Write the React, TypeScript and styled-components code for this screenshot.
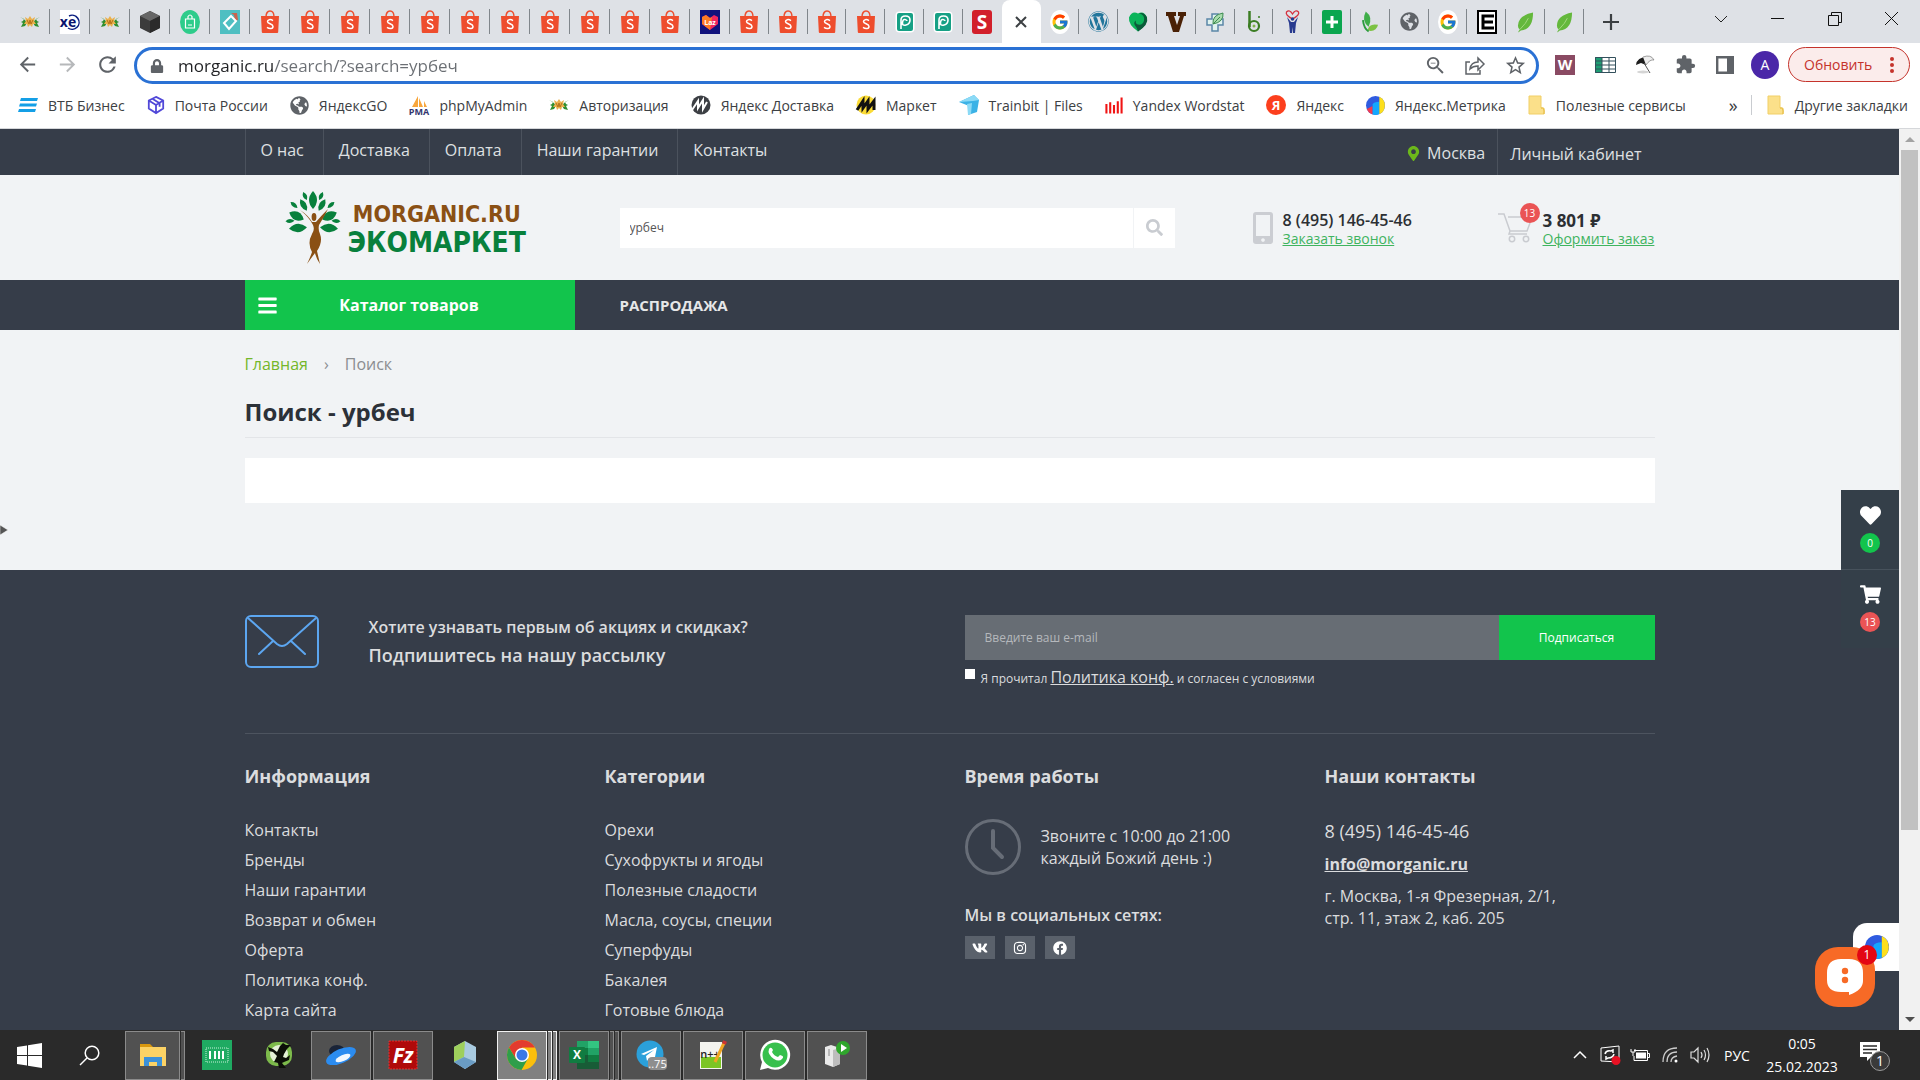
import React from "react";
import styled, { createGlobalStyle, css } from "styled-components";
import { FaHeart, FaShoppingCart, FaVk, FaInstagram, FaFacebook, FaSearch, FaMapMarkerAlt, FaWordpress, FaGlobeAmericas, FaLock, FaBars } from "react-icons/fa";
import { FcGoogle } from "react-icons/fc";
import { MdArrowBack, MdArrowForward, MdRefresh, MdStarBorder, MdZoomOut, MdExtension } from "react-icons/md";

const Global = createGlobalStyle`
  *, *::before, *::after { box-sizing: border-box; }
  body { margin: 0; background: #363d49; font-family: "Open Sans", "Noto Sans", sans-serif; font-size: 16px; }
  button, input { font-family: inherit; }
  button { border: 0; padding: 0; background: none; cursor: pointer; color: inherit; }
  a { color: inherit; text-decoration: none; }
  h1, h2, h3, p, ul { margin: 0; padding: 0; }
  ul { list-style: none; }
  svg { display: block; flex: none; overflow: visible; }
`;

const Screen = styled.div`
  height: 100vh;
  display: flex;
  flex-direction: column;
  overflow: hidden;
`;

/* ---------- browser chrome ---------- */
const TabStrip = styled.div`
  height: 43px;
  display: flex;
  background: #dee1e6;
  padding-left: 10px;
`;
const TabGroup = styled.div<{ $width: number }>`
  flex: 0 1 ${(p) => p.$width}px;
  display: flex;
`;
const Tab = styled.button<{ $active?: boolean; $line: boolean }>`
  flex: 1 1 0;
  display: flex;
  align-items: center;
  justify-content: center;
  background: linear-gradient(#80868b, #80868b) right center / ${(p) => (p.$line ? 1 : 0)}px 25px no-repeat;
  ${(p) => p.$active && css`
    background: #fff;
    border-radius: 8px 8px 0 0;
  `}
`;
const NewTab = styled.button`
  width: 54px;
  display: flex;
  align-items: center;
  justify-content: center;
`;
const WindowButtons = styled.div`
  margin-left: auto;
  display: flex;
`;
const WindowButton = styled.button`
  width: 57px;
  height: 37px;
  display: flex;
  align-items: center;
  justify-content: center;
`;
const Toolbar = styled.div`
  display: flex;
  align-items: center;
  height: 43px;
  padding: 0 10px 0 7px;
  background: #fff;
  color: #5f6368;
`;
const ToolButton = styled.button<{ $faded?: boolean }>`
  width: 40px;
  height: 36px;
  display: flex;
  align-items: center;
  justify-content: center;
  opacity: ${(p) => (p.$faded ? 0.45 : 1)};
`;
const AddressBar = styled.label`
  flex: 1;
  height: 37px;
  margin: 2px 6px 0 7px;
  padding: 0 1px 0 13px;
  display: flex;
  align-items: center;
  gap: 14px;
  border: 3px solid #2a71d4;
  border-radius: 20px;
`;
const AddressInput = styled.input`
  flex: 1;
  min-width: 0;
  border: 0;
  padding: 0;
  outline: 0;
  font-size: 17px;
  color: transparent;
  background: linear-gradient(90deg, #202124 96px, #6b6f74 96px);
  background-clip: text;
  -webkit-background-clip: text;
`;
const AddressActions = styled.span`
  display: flex;
`;
const Avatar = styled.span`
  width: 28px;
  height: 28px;
  border-radius: 50%;
  background: #4a27a8;
  color: #fff;
  font-size: 14px;
  line-height: 28px;
`;
const UpdateButton = styled.button`
  width: 122px;
  height: 35px;
  margin-left: 3px;
  padding: 0 15px;
  display: flex;
  align-items: center;
  justify-content: space-between;
  border: 1px solid #c5332b;
  border-radius: 18px;
  background: #fbeceb;
  color: #c5332b;
  font-size: 14px;
`;
const Bookmarks = styled.nav`
  height: 43px;
  padding: 0 12px 4px 18px;
  display: flex;
  align-items: center;
  background: #fff;
  border-bottom: 1px solid #d5d7da;
  color: #3c4043;
  font-size: 14px;
`;
const Bookmark = styled.a`
  display: flex;
  align-items: center;
  gap: 10px;
  margin-right: 22px;
  white-space: nowrap;
`;
const More = styled.button`
  margin-left: auto;
  font-size: 18px;
  line-height: 20px;
`;
const OtherBookmarks = styled(Bookmark)`
  margin: 0 0 0 13px;
  padding-left: 15px;
  border-left: 1px solid #c9ccd0;
`;

/* ---------- shop page ---------- */
const Viewport = styled.div`
  position: relative;
  flex: 1;
  min-height: 0;
  display: flex;
`;
const Page = styled.div`
  flex: 1;
  min-width: 0;
  overflow: hidden;
  background: #f1f3f5;
`;
const Container = styled.div`
  max-width: 1410px;
  margin: 0 auto;
`;
const TopBar = styled.div`
  background: #363d49;
  color: #dfe0e2;
`;
const TopRow = styled(Container)`
  height: 46px;
  display: flex;
  justify-content: space-between;
`;
const TopLinks = styled.nav`
  display: flex;
`;
const TopLink = styled.a`
  padding: 0 19px 0 15px;
  line-height: 42px;
  border-left: 1px solid #4b525d;
  &:last-child { padding-right: 0; }
`;
const TopSide = styled.div`
  display: flex;
  line-height: 48px;
`;
const City = styled.button`
  display: flex;
  align-items: center;
  gap: 6px;
  padding: 2px 12px 0 0;
  font-size: 16px;
`;
const Account = styled.a`
  padding: 1px 13px 0 12px;
  border-left: 1px solid #4b525d;
`;
const Header = styled(Container)`
  height: 105px;
  display: grid;
  grid-template-columns: 375px minmax(0, 1fr) 245px 157px;
  align-items: center;
`;
const Logo = styled.a`
  display: flex;
  align-items: center;
  gap: 6px;
  padding-left: 40px;
`;
const LogoWords = styled.span`
  display: flex;
  flex-direction: column;
  align-items: center;
  padding-top: 4px;
  font-family: "DejaVu Sans Condensed", "DejaVu Sans", sans-serif;
  font-weight: 700;
`;
const LogoName = styled.span`
  font-size: 23px;
  line-height: 26px;
  color: #8a5014;
`;
const LogoKind = styled.span`
  font-size: 28px;
  line-height: 32px;
  color: #08803c;
`;
const SearchForm = styled.form`
  display: flex;
  height: 40px;
  margin-right: 78px;
  background: #fff;
`;
const SearchInput = styled.input`
  flex: 1;
  min-width: 0;
  border: 0;
  padding: 0 10px;
  font-size: 12px;
  color: #555;
  background: none;
`;
const SearchButton = styled.button`
  width: 42px;
  display: flex;
  align-items: center;
  justify-content: center;
  border-left: 1px solid #f1f3f5;
  color: #c9ccd1;
`;
const Contact = styled.div`
  display: flex;
  align-items: center;
  gap: 10px;
  white-space: nowrap;
`;
const ContactText = styled.div`
  display: flex;
  flex-direction: column;
  line-height: 19px;
  padding-top: 3px;
`;
const Strong = styled.strong<{ $bold?: boolean }>`
  font-size: ${(p) => (p.$bold ? 17 : 16)}px;
  font-weight: ${(p) => (p.$bold ? 700 : 600)};
  color: #2c2f33;
`;
const GreenLink = styled.a`
  font-size: 14px;
  line-height: 18px;
  color: #3fb45f;
  text-decoration: underline;
`;
const CartMark = styled.span`
  position: relative;
  width: 35px;
`;
const Badge = styled.span<{ $color: string }>`
  width: 20px;
  height: 20px;
  border-radius: 50%;
  background: ${(p) => p.$color};
  color: #fff;
  font-size: 10px;
  line-height: 20px;
  text-align: center;
`;
const CartBadge = styled(Badge)`
  position: absolute;
  top: -10px;
  right: -7px;
`;
const MenuBar = styled.div`
  background: #363d49;
`;
const MenuRow = styled(Container)`
  display: flex;
  height: 50px;
  align-items: center;
`;
const CatalogButton = styled.button`
  width: 330px;
  height: 50px;
  padding: 0 34px 0 12px;
  display: flex;
  align-items: center;
  background: #12c44c;
  color: #fff;
  font-size: 16px;
  font-weight: 700;
`;
const CatalogLabel = styled.span`
  flex: 1;
  text-align: center;
`;
const MenuLink = styled.a`
  margin-left: 45px;
  color: #e6e7e8;
  font-size: 15px;
  font-weight: 700;
`;
const Main = styled(Container).attrs({ as: "main" })`
  padding: 22px 0 67px;
`;
const Crumbs = styled.nav`
  display: flex;
  gap: 16px;
  line-height: 24px;
  color: #8b8d90;
`;
const CrumbLink = styled.a`
  color: #74b72a;
`;
const Title = styled.h1`
  margin: 20px 0 20px;
  padding-bottom: 9px;
  border-bottom: 1px solid #e3e5e8;
  font-size: 24px;
  line-height: 32px;
  font-weight: 700;
  color: #2c3138;
`;
const Results = styled.section`
  height: 45px;
  background: #fff;
`;
const Footer = styled.footer`
  padding-top: 45px;
  background: #363d49;
  color: #dbdcde;
`;
const Subscribe = styled(Container)`
  display: grid;
  grid-template-columns: 720px minmax(0, 1fr);
  align-items: start;
  padding-bottom: 42px;
  border-bottom: 1px solid #4d545f;
`;
const Pitch = styled.div`
  display: flex;
  gap: 50px;
`;
const PitchText = styled.div`
  font-weight: 600;
`;
const PitchLine = styled.p<{ $large?: boolean }>`
  font-size: ${(p) => (p.$large ? 18 : 16)}px;
  line-height: ${(p) => (p.$large ? 32 : 24)}px;
`;
const MailForm = styled.form`
  display: grid;
  grid-template-columns: 1fr 156px;
`;
const MailInput = styled.input`
  height: 45px;
  min-width: 0;
  border: 0;
  padding: 0 20px;
  background: #676d74;
  color: #fff;
  font-size: 12px;
  &::placeholder { color: #b5b8bc; opacity: 1; }
`;
const MailButton = styled.button`
  background: #12c44c;
  color: #fff;
  font-size: 12px;
`;
const Agree = styled.div`
  grid-column: 1 / -1;
  display: flex;
  gap: 6px;
  padding-top: 5px;
  font-size: 12px;
  line-height: 24px;
`;
const Tick = styled.input`
  appearance: none;
  width: 10px;
  height: 10px;
  margin: 4px 0 0;
  background: #fff;
`;
const PolicyLink = styled.a`
  font-size: 16px;
  text-decoration: underline;
`;
const Columns = styled(Container)`
  display: grid;
  grid-template-columns: repeat(3, 360px) minmax(0, 1fr);
  padding: 30px 0 60px;
`;
const ColumnTitle = styled.h2`
  margin-bottom: 27px;
  font-size: 18px;
  line-height: 24px;
  font-weight: 700;
`;
const LinkList = styled.ul`
  line-height: 30px;
`;
const Hours = styled.div`
  display: flex;
  align-items: center;
  gap: 20px;
  padding-top: 4px;
  line-height: 22px;
`;
const SocialTitle = styled.h3`
  margin: 29px 0 10px;
  font-size: 16px;
  line-height: 22px;
  font-weight: 600;
`;
const Socials = styled.div`
  display: flex;
  gap: 10px;
`;
const Social = styled.a`
  width: 30px;
  height: 23px;
  display: flex;
  align-items: center;
  justify-content: center;
  background: #5a616b;
  color: #fff;
`;
const Address = styled.address`
  padding-top: 4px;
  display: flex;
  flex-direction: column;
  align-items: flex-start;
  gap: 10px;
  font-style: normal;
  line-height: 22px;
`;
const Phone = styled.a`
  font-size: 18px;
  line-height: 24px;
`;
const Mail = styled.a`
  font-weight: 700;
  text-decoration: underline;
`;

/* ---------- overlays ---------- */
const Scrollbar = styled.div`
  width: 21px;
  display: flex;
  flex-direction: column;
  align-items: center;
  justify-content: space-between;
  padding: 7px 0 7px;
  background: #f1f1f1;
`;
const Thumb = styled.div`
  width: 17px;
  flex: 0 1 680px;
  margin: 8px 0 auto;
  background: #c1c1c1;
`;
const SidePanel = styled.aside`
  position: absolute;
  right: 21px;
  top: 361px;
  width: 58px;
  background: #343f49;
  color: #fff;
`;
const SideItem = styled.a`
  height: 79px;
  padding-top: 15px;
  display: flex;
  flex-direction: column;
  align-items: center;
  gap: 7px;
  & + & { border-top: 1px solid #47525c; padding-top: 14px; }
`;
const Drawer = styled.button`
  position: absolute;
  left: 0;
  top: 395px;
`;
const MetrikaTab = styled.a`
  position: absolute;
  right: 21px;
  bottom: 59px;
  width: 46px;
  height: 48px;
  padding: 12px;
  border-radius: 14px 0 0 0;
  background: #fff;
`;
const Chat = styled.button`
  position: absolute;
  right: 45px;
  bottom: 23px;
  width: 60px;
  height: 60px;
  display: flex;
  align-items: center;
  justify-content: center;
  border-radius: 23px;
  background: #f76a26;
`;
const ChatBadge = styled(Badge)`
  position: absolute;
  right: -2px;
  top: -2px;
  font-size: 12px;
`;

/* ---------- taskbar ---------- */
const TaskBar = styled.footer`
  height: 50px;
  display: flex;
  align-items: center;
  background: #2a2a2a;
  color: #fff;
`;
const TaskButton = styled.button<{ $width: number }>`
  width: ${(p) => p.$width}px;
  height: 48px;
  display: flex;
  align-items: center;
  justify-content: center;
`;
const Apps = styled.div`
  display: flex;
  gap: 2px;
  margin-left: 5px;
`;
const AppButton = styled.button`
  width: 60px;
  height: 49px;
  display: flex;
  gap: 1px;
`;
const Face = styled.span<{ $mode: "idle" | "open" | "active" }>`
  flex: 1;
  display: flex;
  align-items: center;
  justify-content: center;
  border: 1px solid ${(p) => ({ idle: "transparent", open: "#8b8b8b", active: "#f2f2f2" })[p.$mode]};
  background: ${(p) => ({ idle: "transparent", open: "#515151", active: "#808080" })[p.$mode]};
`;
const Sliver = styled.span<{ $active: boolean }>`
  width: 4px;
  border: 1px solid ${(p) => (p.$active ? "#f2f2f2" : "#8b8b8b")};
  border-left: 0;
  background: ${(p) => (p.$active ? "#808080" : "#515151")};
`;
const Tray = styled.div`
  margin-left: auto;
  padding-right: 15px;
  display: flex;
  align-items: center;
`;
const Language = styled.button`
  width: 44px;
  font-size: 14px;
`;
const Clock = styled.time`
  width: 86px;
  font-size: 14px;
  line-height: 23px;
  text-align: center;
`;

/* ---------- drawings ---------- */
const Shopee = () => (
  <svg width="18" height="23" viewBox="0 0 18 23">
    <path d="M5 7c0-8 8-8 8 0" fill="none" stroke="#ee4d2d" strokeWidth="1.400" />
    <path d="M0 6h18l-.8 16q0 1-1 1H1.800q-1 0-1-1z" fill="#ee4d2d" />
    <path d="M12 10.600C9.600 9 6.400 9.400 6.500 11.600c.1 2.400 5.500 2 5.500 4.800 0 2.500-3.400 2.800-6 .9" fill="none" stroke="#fff" strokeWidth="1.500" />
  </svg>
);
const Morganic = () => (
  <svg width="20" height="14" viewBox="0 0 20 14">
    <path d="M0 2l4 2-1 2-2 1 2 1-2 4 4-1 2-3-2-3zM20 2l-4 2 1 2 2 1-2 1 2 4-4-1-2-3 2-3z" fill="#2f8f2f" />
    <path d="M5 2l3 2 2-3 2 3 3-2-1 4 2 3-3 0-1 3-2-2-2 2-1-3-3 0 2-3z" fill="#eab04c" />
    <path d="M7 5l2 4 1-4 1 4 2-4" fill="none" stroke="#b4701a" />
  </svg>
);
const Metrika = ({ size = 20 }: { size?: number }) => (
  <svg width={size} height={size} viewBox="0 0 20 20">
    <path d="M10 0a10 10 0 1 0 0 20a10 10 0 0 0 0-20z" fill="#2f5be0" />
    <path d="M.8 13.800a10 10 0 0 0 6.200 5.700v-9z" fill="#f33a4e" />
    <path d="M7 9q1-3 7-3v13q-3.500 1.500-7 .5z" fill="#12a7ff" />
    <path d="M14 .9a10 10 0 0 1 0 18.200z" fill="#fddf1c" />
  </svg>
);
const Folder = () => (
  <svg width="18" height="20" viewBox="0 0 18 20">
    <path d="M1 1h12v12h3v6H1z" fill="#fbe08a" stroke="#f1cf66" />
    <path d="M13 13q4-1 3 6" fill="none" stroke="#e5b93c" />
  </svg>
);
const Leaf = () => (
  <svg width="17" height="22" viewBox="0 0 18 22">
    <path d="M17 1Q1 4 1 15q0 3 2 4-1 1-2 3 2-1 3-2 13-1 13-19z" fill="#64b83c" />
    <path d="M3 19Q10 12 12 7" stroke="#a5da83" fill="none" />
  </svg>
);
const Letter = ({ bg, text, size = 14, round = 2, height = 20 }: { bg: string; text: string; size?: number; round?: number; height?: number }) => (
  <svg width="20" height={height} viewBox={`0 0 20 ${height}`}>
    <rect width="20" height={height} rx={round} fill={bg} />
    <text x="10" y={height / 2 + size * 0.36} textAnchor="middle" fontSize={size} fontWeight="700" fill="#fff">{text}</text>
  </svg>
);
const SlabV = () => (
  <svg width="20" height="20" viewBox="0 0 20 20">
    <path d="M0 0h10v4H8l3 9 3-9h-2V0h8v4h-2l-5 16H7L2 4H0z" fill="#4a2106" />
  </svg>
);
const PlusTile = () => (
  <svg width="20" height="24" viewBox="0 0 20 24">
    <rect width="20" height="24" rx="2" fill="#0ba64f" />
    <path d="M10 6v12M4 12h12" stroke="#fff" strokeWidth="3" />
  </svg>
);
const Spiral = () => (
  <svg width="20" height="22" viewBox="0 0 20 22">
    <rect x=".5" y=".5" width="19" height="21" rx="4" fill="#fff" />
    <rect x="2" y="2" width="16" height="18" rx="2" fill="#16a085" />
    <path d="M6 18V9q0-4 4.500-4t4.500 4-4 5-3.500-2.500 2.500-3 2 1.500" fill="none" stroke="#fff" strokeWidth="1.600" />
  </svg>
);
const Box = () => (
  <svg width="22" height="24" viewBox="0 0 22 22">
    <path d="M11 0l10 5v12l-10 5-10-5V5z" fill="#3c3c3c" />
    <path d="M11 0l10 5-10 5L1 5z" fill="#666" />
    <path d="M11 10l10-5v12l-10 5z" fill="#2b2b2b" />
  </svg>
);
const GreenBag = () => (
  <svg width="20" height="24" viewBox="0 0 20 24">
    <ellipse cx="10" cy="12" rx="10" ry="12" fill="#2ecc8b" />
    <path d="M5.500 9h9v9h-9zM8 9V6.500q2-3 4 0V9M8 15h4" fill="none" stroke="#fff" strokeWidth="1.200" />
  </svg>
);
const Diamond = () => (
  <svg width="20" height="24" viewBox="0 0 20 24">
    <rect width="20" height="24" fill="#4fbfc2" />
    <path d="M11 3h6l1 7-3 1-1-6z" fill="#c9654e" />
    <path d="M11 6L4 13l5 6 7-8z" fill="none" stroke="#fff" strokeWidth="2" />
  </svg>
);
const Xe = () => (
  <svg width="20" height="24" viewBox="0 0 20 24">
    <rect width="20" height="24" fill="#fff" />
    <path d="M9 6a7 7 0 1 1-1 12" fill="none" stroke="#0b1e80" strokeWidth="1.500" />
    <text x="8" y="17" textAnchor="middle" fontSize="14" fontWeight="700" fill="#0a146e">xe</text>
  </svg>
);
const Lazada = () => (
  <svg width="20" height="24" viewBox="0 0 20 24">
    <rect width="20" height="24" fill="#10127c" />
    <path d="M10 20L2 14V7l4-2 4 3 4-3 4 2v7z" fill="#f1275f" />
    <path d="M10 20L2 14V7l4-2 4 3 2-1z" fill="#fb7a25" />
    <text x="10" y="15" textAnchor="middle" fontSize="7" fontWeight="700" fill="#fff">Laz</text>
  </svg>
);
const Swirl = () => (
  <svg width="20" height="21" viewBox="0 0 20 20">
    <path d="M10 20Q0 13 1 6 4-1 10 2q6-3 9 4 1 7-9 14z" fill="#0bb45a" />
    <path d="M10 20q11-7 9-14-3-6-8-4 6 1 5 7-1 5-6 4-3-1-2-4-3 2-1 5 2 2 3 6z" fill="#0b5b3a" />
  </svg>
);
const CrossLeaf = () => (
  <svg width="20" height="22" viewBox="0 0 20 20">
    <path d="M7 2h6v5h5v6h-5v6H7v-6H2V7h5z" fill="#dff2ef" stroke="#5b86a8" strokeWidth="1.500" />
    <path d="M8 12Q7 3 18 1q1 9-10 11z" fill="#a9dcae" stroke="#3c8b50" />
    <path d="M8 12l7-7" stroke="#3c8b50" />
  </svg>
);
const GreenB = () => (
  <svg width="14" height="23" viewBox="0 0 14 23">
    <path d="M2.500 1v16" stroke="#3b7d23" strokeWidth="2.500" />
    <circle cx="7" cy="16" r="5" fill="none" stroke="#3b7d23" strokeWidth="2.200" />
    <circle cx="7" cy="16" r="1.500" fill="#7fb24a" />
    <circle cx="12" cy="7" r="1" fill="#3b7d23" />
  </svg>
);
const HeartMan = () => (
  <svg width="15" height="24" viewBox="0 0 15 24">
    <path d="M7.500 9Q0 5 1.500 2q3-3 6 2 3-5 6-2 1.500 3-6 7z" fill="none" stroke="#d5303e" strokeWidth="1.300" />
    <path d="M2 7l4 5h3l4-5-2 6-1 10H8l-.5-6L7 23H5L4 13z" fill="#283a8f" />
    <circle cx="7.500" cy="9" r="1.800" fill="#283a8f" />
  </svg>
);
const Sprout = () => (
  <svg width="17" height="22" viewBox="0 0 18 22">
    <path d="M4 0q8 6 3 16-8-6-3-16z" fill="#3fae49" />
    <path d="M6 20q1-8 11-6-2 8-11 6z" fill="#7cc243" />
    <path d="M1 9q1 9 6 12" stroke="#2c9b3f" fill="none" strokeWidth="2" />
  </svg>
);
const SquareE = () => (
  <svg width="20" height="24" viewBox="0 0 20 24">
    <rect x="1" y="1" width="18" height="22" fill="#fff" stroke="#000" strokeWidth="2" />
    <path d="M17 6H6v12h11M6 12h10" fill="none" stroke="#000" strokeWidth="3" />
  </svg>
);
const Cross = ({ size, width = 2, color = "#3c4043" }: { size: number; width?: number; color?: string }) => (
  <svg width={size} height={size} viewBox="0 0 10 10">
    <path d="M0 0l10 10M10 0L0 10" stroke={color} strokeWidth={width} vectorEffect="non-scaling-stroke" />
  </svg>
);
const GoogleTab = () => (
  <svg width="20" height="24" viewBox="0 0 20 24">
    <ellipse cx="10" cy="12" rx="10" ry="12" fill="#fff" />
    <g transform="translate(1 3)"><FcGoogle size={18} /></g>
  </svg>
);

const tabsWide: React.ReactNode[] = [
  <Morganic />, <Xe />, <Morganic />, <Box />, <GreenBag />, <Diamond />,
  ...Array.from({ length: 11 }, () => <Shopee />), <Lazada />,
];
const tabsNarrow: React.ReactNode[] = [
  <Shopee />, <Shopee />, <Shopee />, <Shopee />, <Spiral />, <Spiral />,
  <Letter bg="#d2202b" text="S" size={19} round={3} height={24} />,
  <Cross size={10} />,
  <GoogleTab />, <FaWordpress size={21} color="#21759b" />, <Swirl />, <SlabV />,
  <CrossLeaf />, <GreenB />, <HeartMan />, <PlusTile />,
  <Sprout />, <FaGlobeAmericas size={19} color="#5f6368" />, <GoogleTab />, <SquareE />, <Leaf />, <Leaf />,
];
const ACTIVE = 7;

const bookmarks: [React.ReactNode, string][] = [
  [<svg width="20" height="14" viewBox="0 0 20 14"><path d="M3 0h17l-1 3H2zM2 5.500h17l-1 3H1zM1 11h17l-1 3H0z" fill="#149fe6" /></svg>, "ВТБ Бизнес"],
  [<svg width="18" height="20" viewBox="0 0 20 20"><path d="M10 1l8 4v9l-8 5-8-5V5zM2 5l8 5 8-5M10 10v9M6 3l8 5v4" fill="none" stroke="#5148d8" strokeWidth="2" /></svg>, "Почта России"],
  [<FaGlobeAmericas size={19} color="#5f6368" />, "ЯндексGO"],
  [<svg width="20" height="20" viewBox="0 0 20 20"><path d="M3 12L9 1v11zM10 12V3l4 9zM15 12V6l3 6z" fill="#f7a63c" /><text x="10" y="20" textAnchor="middle" fontSize="9" fontWeight="700" fill="#33356e">PMA</text></svg>, "phpMyAdmin"],
  [<Morganic />, "Авторизация"],
  [<svg width="20" height="20" viewBox="0 0 20 20"><circle cx="10" cy="10" r="9.500" fill="#3c3f44" /><path d="M1 15l6-9v7l5-8v9l4-7" fill="none" stroke="#fff" strokeWidth="2" /></svg>, "Яндекс Доставка"],
  [<svg width="20" height="20" viewBox="0 0 20 20"><circle cx="10" cy="10" r="9.500" fill="#fbdb36" /><path d="M1 15l6-9v7l5-7v8l6-8v9" fill="none" stroke="#111" strokeWidth="3" /></svg>, "Маркет"],
  [<svg width="20" height="20" viewBox="0 0 20 20"><path d="M0 7L15 0l5 5-2 12-9 3 1-9z" fill="#3bb2e6" /><path d="M0 7l14-1 6-1-5-5zM8 9l5-1-1 11-3 1z" fill="#8bdaf6" /></svg>, "Trainbit | Files"],
  [<svg width="18" height="18" viewBox="0 0 19 18"><path d="M1.500 8v10M5.500 6v12M9.500 9v9M13.500 5v13M17.500 1v17" stroke="#f01414" strokeWidth="2.200" /></svg>, "Yandex Wordstat"],
  [<Letter bg="#fc3f1d" text="Я" size={13} round={10} />, "Яндекс"],
  [<Metrika size={19} />, "Яндекс.Метрика"],
  [<Folder />, "Полезные сервисы"],
];

const Tree = () => {
  const leaves = [
    [28, 10, 4, 9, 0], [20, 6, 2, 4.5, -25], [36, 6, 2, 4.5, 25], [18.5, 15, 3, 6.5, -30], [37, 15, 3, 6.5, 30],
    [9, 15, 2, 4.5, -50], [46, 15, 2, 4.5, 50], [11.5, 26, 4.3, 8, -65], [44.5, 26, 4.3, 8, 65],
    [5, 31, 2, 4.5, -92], [51, 31, 2, 4.5, 92], [13, 38, 4.3, 9, -95], [44, 38, 4.3, 9, 95],
  ];
  return (
    <svg width="57" height="76" viewBox="0 0 57 76">
      {leaves.map(([x, y, rx, ry, r], i) => (
        <path key={i} transform={`translate(${x} ${y}) rotate(${r})`} fill="#08803c"
          d={`M0 ${-ry}Q${rx * 2} 0 0 ${ry}Q${-rx * 2} 0 0 ${-ry}z`} />
      ))}
      <ellipse cx="29" cy="27" rx="2.400" ry="4" fill="#8a5014" />
      <path d="M15 20q8 5 12 12h4q5-6 12-13-4 8-9 16-1 5 1 9 3 8-3 17l3 13q-4-6-5-11-3 4-8 11 3-6 5-12-5-9 0-18 3-4 1-9-4-8-13-15z" fill="#8a5014" />
    </svg>
  );
};

const infoLinks = ["Контакты", "Бренды", "Наши гарантии", "Возврат и обмен", "Оферта", "Политика конф.", "Карта сайта"];
const categoryLinks = ["Орехи", "Сухофрукты и ягоды", "Полезные сладости", "Масла, соусы, специи", "Суперфуды", "Бакалея", "Готовые блюда"];

type TaskApp = { name: string; mode: "idle" | "open" | "active"; stack?: number; icon: React.ReactNode };
const apps: TaskApp[] = [
  { name: "Проводник", mode: "open", stack: 1, icon: <svg width="28" height="24" viewBox="0 0 28 24"><path d="M1 1h10l3 3H1z" fill="#d9980f" /><path d="M1 4h26v19H1z" fill="#fbd265" /><path d="M5 23v-9h18v9h-5v-4h-8v4z" fill="#3c91d8" /></svg> },
  { name: "Терминал", mode: "idle", icon: <svg width="30" height="30" viewBox="0 0 30 30"><rect width="30" height="30" fill="#1faa62" /><rect x="4" y="8" width="22" height="14" fill="none" stroke="#c9f0da" strokeDasharray="1 1" /><path d="M8 11v8M13 11v8M17 11v8M21 11v8" stroke="#fff" strokeWidth="2" /></svg> },
  { name: "Frog", mode: "idle", icon: <svg width="28" height="28" viewBox="0 0 28 28"><rect x="1" y="1" width="26" height="24" rx="10" fill="#7dba4b" /><circle cx="14" cy="13" r="9" fill="#e4f0d6" /><path d="M3 6l5 2 4 3 3-6 3-3 3 2 5 0-4 4-3 5-1 3 3 1 4-3-1 5-5 2-2 1 4 5h-7l-1-5-4-1 3-6-4-4-4-1z" fill="#0c0f08" /></svg> },
  { name: "Диск", mode: "open", icon: <svg width="32" height="24" viewBox="0 0 32 24"><ellipse cx="12" cy="8" rx="8" ry="6" fill="#1a2438" /><ellipse cx="16" cy="13" rx="16" ry="7" transform="rotate(-24 16 13)" fill="#2b8cf0" /><ellipse cx="18" cy="15" rx="8" ry="3" transform="rotate(-24 18 15)" fill="#f1f8ff" /></svg> },
  { name: "FileZilla", mode: "open", icon: <svg width="30" height="30" viewBox="0 0 30 30"><rect x="1" y="1" width="28" height="28" fill="#b00a0a" stroke="#d33" strokeDasharray="2 1" /><text x="15" y="23" textAnchor="middle" fontSize="21" fontStyle="italic" fontWeight="700" fill="#fff">Fz</text></svg> },
  { name: "NetBeans", mode: "idle", icon: <svg width="24" height="28" viewBox="0 0 24 28"><path d="M12 0L1 6v15l11 7 11-7V6z" fill="#a9cbe0" /><path d="M12 0L1 6v15l10-5z" fill="#9ed05c" /><path d="M1 21l10-5 12 5-11 7z" fill="#6a9cc4" /></svg> },
  { name: "Chrome", mode: "active", stack: 2, icon: <svg width="30" height="30" viewBox="0 0 30 30"><circle cx="15" cy="15" r="15" fill="#fbbf0c" /><path d="M2 7.500A15 15 0 0 1 28 7.500H15L9 19z" fill="#e33b2e" /><path d="M2 7.500A15 15 0 0 0 14.500 30l6.500-11.500L15 20l-6-1z" fill="#2f9e4a" /><circle cx="15" cy="15" r="7" fill="#fff" /><circle cx="15" cy="15" r="5.500" fill="#3a78e7" /></svg> },
  { name: "Excel", mode: "open", stack: 2, icon: <svg width="30" height="28" viewBox="0 0 30 28"><path d="M8 0h22v28H8z" fill="#21a366" /><path d="M8 14h22v14H8z" fill="#185c37" /><path d="M19 0h11v7H19z" fill="#33c481" /><path d="M8 7h11v7H8zM19 14h11v7H19z" fill="#107c41" /><rect y="6" width="16" height="16" rx="1" fill="#107c41" /><text x="8" y="18" textAnchor="middle" fontSize="12" fontWeight="700" fill="#fff">X</text></svg> },
  { name: "Telegram", mode: "open", icon: <svg width="31" height="30" viewBox="0 0 31 30"><circle cx="14" cy="14" r="13.500" fill="#2ba0da" /><path d="M5 14l16-7-3 15-5-4-2 3-1-5 8-6-10 5z" fill="#fff" /><rect x="12" y="17" width="19" height="13" rx="4" fill="#8e8e8e" /><text x="21.500" y="28" textAnchor="middle" fontSize="11" fill="#fff">..75</text></svg> },
  { name: "Notepad++", mode: "open", icon: <svg width="30" height="30" viewBox="0 0 30 30"><path d="M2 2h22v27H2z" fill="#f4f4ef" /><path d="M3 17h20v11H3z" fill="#7cc524" /><text x="12" y="18" textAnchor="middle" fontSize="11" fontWeight="600" fill="#222">n++</text><path d="M26 3L17 22" stroke="#f0a523" strokeWidth="3" /><path d="M27 1l-1 3" stroke="#c33" strokeWidth="4" /></svg> },
  { name: "WhatsApp", mode: "open", icon: <svg width="30" height="30" viewBox="0 0 30 30"><path d="M0 30l2-8A15 15 0 1 1 8 28z" fill="#fff" /><circle cx="15" cy="15" r="12.500" fill="#37c04d" /><path d="M9 9q2-3 4 1l-1 2q2 4 6 5l2-2q5 1 2 4-3 3-8 0-7-5-5-10z" fill="#fff" /></svg> },
  { name: "Сервер", mode: "open", icon: <svg width="26" height="28" viewBox="0 0 26 28"><path d="M1 6l6-2 9 3v16l-7 3-8-3z" fill="#e9e9e9" /><path d="M9 9l7-2v16l-7 3z" fill="#bdbdbd" /><path d="M5 8v7" stroke="#888" /><circle cx="19" cy="7" r="7" fill="#2fa62c" /><path d="M17 3l6 4-6 4z" fill="#fff" /></svg> },
];

const line = { fill: "none", stroke: "#fff", strokeWidth: 1.5 };

export default function App() {
  return (
    <>
      <Global />
      <Screen>
        <TabStrip>
          <TabGroup $width={720}>
            {tabsWide.map((icon, i) => <Tab key={i} $line aria-label={`Вкладка ${i + 1}`}>{icon}</Tab>)}
          </TabGroup>
          <TabGroup $width={854}>
            {tabsNarrow.map((icon, i) => (
              <Tab key={i} $active={i === ACTIVE} $line={i !== ACTIVE && i !== ACTIVE - 1} aria-label={`Вкладка ${i + 19}`}>{icon}</Tab>
            ))}
          </TabGroup>
          <NewTab aria-label="Новая вкладка">
            <svg width="16" height="16" viewBox="0 0 16 16"><path d="M8 0v16M0 8h16" stroke="#3c4043" strokeWidth="2.200" /></svg>
          </NewTab>
          <WindowButtons>
            <WindowButton aria-label="Поиск вкладок"><svg width="14" height="8" viewBox="0 0 14 8"><path d="M1 1l6 6 6-6" fill="none" stroke="#222" /></svg></WindowButton>
            <WindowButton aria-label="Свернуть"><svg width="13" height="2" viewBox="0 0 13 2"><path d="M0 .5h13" stroke="#111" strokeWidth="1" /></svg></WindowButton>
            <WindowButton aria-label="Восстановить"><svg width="14" height="14" viewBox="0 0 14 14"><path d="M.5 3.500h10v10H.5zM3.500 3V.5h10v10H11" fill="none" stroke="#111" /></svg></WindowButton>
            <WindowButton aria-label="Закрыть"><Cross size={13} width={1} color="#111" /></WindowButton>
          </WindowButtons>
        </TabStrip>

        <Toolbar>
          <ToolButton aria-label="Назад"><MdArrowBack size={23} /></ToolButton>
          <ToolButton $faded aria-label="Вперёд"><MdArrowForward size={23} /></ToolButton>
          <ToolButton aria-label="Обновить страницу"><MdRefresh size={25} /></ToolButton>
          <AddressBar>
            <FaLock size={14} />
            <AddressInput aria-label="Адресная строка" defaultValue="morganic.ru/search/?search=урбеч" />
            <AddressActions>
              <ToolButton type="button" aria-label="Масштаб"><MdZoomOut size={23} /></ToolButton>
              <ToolButton type="button" aria-label="Поделиться">
                <svg width="20" height="18" viewBox="0 0 20 18"><path d="M5 5H1v12h14v-4M5 12q1-7 8-7V1l6 6-6 6V9q-5 0-8 3z" fill="none" stroke="#5f6368" strokeWidth="1.500" /></svg>
              </ToolButton>
              <ToolButton type="button" aria-label="В закладки"><MdStarBorder size={23} /></ToolButton>
            </AddressActions>
          </AddressBar>
          <ToolButton aria-label="W"><Letter bg="#8a4a63" text="W" size={15} round={0} /></ToolButton>
          <ToolButton aria-label="Таблица">
            <svg width="21" height="16" viewBox="0 0 21 16"><path d="M0 0h7v16H0z" fill="#1e9e73" /><path d="M.5.5h20v15H.5zM0 4h21M0 8h21M0 12h21M7 0v16M14 0v16" fill="none" stroke="#33505c" /></svg>
          </ToolButton>
          <ToolButton aria-label="Зонт">
            <svg width="20" height="20" viewBox="0 0 20 20"><path d="M1 10Q2 2 12 2l-1 8-5-2z" fill="#1e1e1e" /><path d="M8 2q8-3 11 3-4-1-8 5" fill="#eee" stroke="#777" strokeWidth=".7" /><path d="M9 8l6 10" stroke="#555" /><ellipse cx="8" cy="17" rx="6" ry="1.500" fill="#d5d5d5" /></svg>
          </ToolButton>
          <ToolButton aria-label="Расширения"><MdExtension size={21} /></ToolButton>
          <ToolButton aria-label="Боковая панель">
            <svg width="18" height="18" viewBox="0 0 18 18"><path d="M1.200 1.200h15.600v15.600H1.200z" fill="none" stroke="#5f6368" strokeWidth="2.400" /><path d="M11 1h6v16h-6z" fill="#5f6368" /></svg>
          </ToolButton>
          <ToolButton aria-label="Профиль"><Avatar>A</Avatar></ToolButton>
          <UpdateButton>
            Обновить
            <svg width="4" height="18" viewBox="0 0 4 18" fill="currentColor"><circle cx="2" cy="3" r="2" /><circle cx="2" cy="9" r="2" /><circle cx="2" cy="15" r="2" /></svg>
          </UpdateButton>
        </Toolbar>

        <Bookmarks aria-label="Закладки">
          {bookmarks.map(([icon, label]) => <Bookmark key={label} href="#">{icon}{label}</Bookmark>)}
          <More aria-label="Ещё закладки">»</More>
          <OtherBookmarks href="#"><Folder />Другие закладки</OtherBookmarks>
        </Bookmarks>

        <Viewport>
          <Page>
            <TopBar>
              <TopRow>
                <TopLinks>
                  {["О нас", "Доставка", "Оплата", "Наши гарантии", "Контакты"].map((t) => <TopLink key={t} href="#">{t}</TopLink>)}
                </TopLinks>
                <TopSide>
                  <City><FaMapMarkerAlt size={15} color="#6cb81b" />Москва</City>
                  <Account href="#">Личный кабинет</Account>
                </TopSide>
              </TopRow>
            </TopBar>

            <Header>
              <Logo href="#">
                <Tree />
                <LogoWords><LogoName>MORGANIC.RU</LogoName><LogoKind>ЭКОМАРКЕТ</LogoKind></LogoWords>
              </Logo>
              <SearchForm>
                <SearchInput aria-label="Поиск" defaultValue="урбеч" />
                <SearchButton type="button" aria-label="Найти"><FaSearch size={17} /></SearchButton>
              </SearchForm>
              <Contact>
                <svg width="20" height="32" viewBox="0 0 20 32"><path fillRule="evenodd" d="M3 0h14q3 0 3 3v26q0 3-3 3H3q-3 0-3-3V3q0-3 3-3zM3 3v21h14V3zM10 26.200a1.800 1.800 0 1 0 .01 0z" fill="#cbcdd2" /></svg>
                <ContactText><Strong>8 (495) 146-45-46</Strong><GreenLink href="#">Заказать звонок</GreenLink></ContactText>
              </Contact>
              <Contact>
                <CartMark>
                  <svg width="34" height="30" viewBox="0 0 34 30"><path d="M0 1h6l6 17h17l3-8M10 4h20M12 18l-1 3h18" fill="none" stroke="#c9cbd0" strokeWidth="1.500" /><circle cx="14" cy="26" r="2.700" fill="none" stroke="#c9cbd0" strokeWidth="1.500" /><circle cx="28" cy="26" r="2.700" fill="none" stroke="#c9cbd0" strokeWidth="1.500" /></svg>
                  <CartBadge $color="#ea5455">13</CartBadge>
                </CartMark>
                <ContactText><Strong $bold>3 801 ₽</Strong><GreenLink href="#">Оформить заказ</GreenLink></ContactText>
              </Contact>
            </Header>

            <MenuBar>
              <MenuRow>
                <CatalogButton><FaBars size={21} /><CatalogLabel>Каталог товаров</CatalogLabel></CatalogButton>
                <MenuLink href="#">РАСПРОДАЖА</MenuLink>
              </MenuRow>
            </MenuBar>

            <Main>
              <Crumbs><CrumbLink href="#">Главная</CrumbLink><span>›</span><span>Поиск</span></Crumbs>
              <Title>Поиск - урбеч</Title>
              <Results />
            </Main>

            <Footer>
              <Subscribe>
                <Pitch>
                  <svg width="74" height="53" viewBox="0 0 74 53"><rect x="1" y="1" width="72" height="51" rx="5" fill="none" stroke="#5ca6f0" strokeWidth="2" /><path d="M3 3l29 26q5 4 10 0L71 3M28 26L14 39M46 26l14 13" fill="none" stroke="#5ca6f0" strokeWidth="2" strokeLinecap="round" /></svg>
                  <PitchText>
                    <PitchLine>Хотите узнавать первым об акциях и скидках?</PitchLine>
                    <PitchLine $large>Подпишитесь на нашу рассылку</PitchLine>
                  </PitchText>
                </Pitch>
                <MailForm>
                  <MailInput type="email" aria-label="E-mail" placeholder="Введите ваш e-mail" />
                  <MailButton type="button">Подписаться</MailButton>
                  <Agree>
                    <Tick type="checkbox" id="agree" />
                    <label htmlFor="agree">Я прочитал <PolicyLink href="#">Политика конф.</PolicyLink> и согласен с условиями</label>
                  </Agree>
                </MailForm>
              </Subscribe>
              <Columns>
                <section>
                  <ColumnTitle>Информация</ColumnTitle>
                  <LinkList>{infoLinks.map((t) => <li key={t}><a href="#">{t}</a></li>)}</LinkList>
                </section>
                <section>
                  <ColumnTitle>Категории</ColumnTitle>
                  <LinkList>{categoryLinks.map((t) => <li key={t}><a href="#">{t}</a></li>)}</LinkList>
                </section>
                <section>
                  <ColumnTitle>Время работы</ColumnTitle>
                  <Hours>
                    <svg width="56" height="56" viewBox="0 0 56 56"><circle cx="28" cy="28" r="26.500" fill="none" stroke="#676d77" strokeWidth="3" /><path d="M28 12v17l9 9" fill="none" stroke="#676d77" strokeWidth="4" strokeLinecap="round" /></svg>
                    <p>Звоните с 10:00 до 21:00<br />каждый Божий день :)</p>
                  </Hours>
                  <SocialTitle>Мы в социальных сетях:</SocialTitle>
                  <Socials>
                    <Social href="#" aria-label="ВКонтакте"><FaVk size={16} /></Social>
                    <Social href="#" aria-label="Instagram"><FaInstagram size={14} /></Social>
                    <Social href="#" aria-label="Facebook"><FaFacebook size={14} /></Social>
                  </Socials>
                </section>
                <section>
                  <ColumnTitle>Наши контакты</ColumnTitle>
                  <Address>
                    <Phone href="#">8 (495) 146-45-46</Phone>
                    <Mail href="#">info@morganic.ru</Mail>
                    <span>г. Москва, 1-я Фрезерная, 2/1,<br />стр. 11, этаж 2, каб. 205</span>
                  </Address>
                </section>
              </Columns>
            </Footer>
          </Page>

          <Scrollbar>
            <svg width="10" height="6" viewBox="0 0 10 6"><path d="M0 6l5-5 5 5z" fill="#a3a3a3" /></svg>
            <Thumb />
            <svg width="10" height="6" viewBox="0 0 10 6"><path d="M0 0l5 5 5-5z" fill="#505050" /></svg>
          </Scrollbar>

          <Drawer aria-label="Открыть панель">
            <svg width="9" height="12" viewBox="0 0 9 12"><path d="M0 1l8 5-8 5z" fill="#555" stroke="#fff" strokeWidth=".5" /></svg>
          </Drawer>
          <SidePanel>
            <SideItem href="#" aria-label="Избранное"><FaHeart size={21} /><Badge $color="#12c44c">0</Badge></SideItem>
            <SideItem href="#" aria-label="Корзина"><FaShoppingCart size={21} /><Badge $color="#ea5455">13</Badge></SideItem>
          </SidePanel>
          <MetrikaTab href="#" aria-label="Метрика"><Metrika size={24} /></MetrikaTab>
          <Chat aria-label="Чат">
            <svg width="36" height="38" viewBox="0 0 36 38"><path d="M14 1h8q14 0 14 14v8q0 9-14 14l0-3h-8Q0 34 0 22v-7Q0 1 14 1z" fill="#fff" /><circle cx="18" cy="13" r="3.200" fill="#f76a26" /><circle cx="18" cy="22" r="3.200" fill="#f76a26" /></svg>
            <ChatBadge $color="#e30613">1</ChatBadge>
          </Chat>
        </Viewport>

        <TaskBar>
          <TaskButton $width={58} aria-label="Пуск">
            <svg width="25" height="25" viewBox="0 0 25 25"><path d="M0 4l10-1.500V12H0zM11 2.300L25 0v12H11zM0 13h10v9.500L0 21zM11 13h14v12l-14-2.300z" fill="#fff" /></svg>
          </TaskButton>
          <TaskButton $width={62} aria-label="Поиск Windows">
            <svg width="21" height="21" viewBox="0 0 21 21"><circle cx="13" cy="8" r="6.800" {...line} /><path d="M8 13l-7 7" {...line} /></svg>
          </TaskButton>
          <Apps>
            {apps.map((a) => (
              <AppButton key={a.name} aria-label={a.name}>
                <Face $mode={a.mode}>{a.icon}</Face>
                {Array.from({ length: a.stack ?? 0 }, (_, i) => <Sliver key={i} $active={a.mode === "active"} />)}
              </AppButton>
            ))}
          </Apps>
          <Tray>
            <TaskButton $width={30} aria-label="Скрытые значки"><svg width="14" height="8" viewBox="0 0 14 8"><path d="M1 7l6-6 6 6" {...line} /></svg></TaskButton>
            <TaskButton $width={30} aria-label="Обновления">
              <svg width="21" height="20" viewBox="0 0 21 20"><path d="M1 3l18-2v16L1 16z" {...line} strokeWidth={1} /><path d="M5 9q1-4 6-3l2-1v3M14 9q-1 4-6 4l-2 1v-3" {...line} /><circle cx="16" cy="15.500" r="4.500" fill="#e81123" /></svg>
            </TaskButton>
            <TaskButton $width={30} aria-label="Батарея">
              <svg width="20" height="14" viewBox="0 0 20 14"><path d="M6 4.500h10v6H6z" fill="#fff" /><path d="M4 2.500h13.500v10H4V8M18 5.500h1.500v4H18M1 1v3h4V1M3 4v4" {...line} strokeWidth={1} /></svg>
            </TaskButton>
            <TaskButton $width={30} aria-label="Сеть">
              <svg width="16" height="16" viewBox="0 0 16 16"><circle cx="14" cy="14" r="1.500" fill="#fff" /><path d="M9 15q0-5 6-6M5 15Q5 5 15 5M1 15Q1 1 15 1" fill="none" stroke="#ccc" strokeWidth="1.300" /></svg>
            </TaskButton>
            <TaskButton $width={30} aria-label="Звук">
              <svg width="20" height="16" viewBox="0 0 20 16"><path d="M1 5h3l4-4v14l-4-4H1zM11 5q2 3 0 6M14 3q3 5 0 10M17 1q4 7 0 14" fill="none" stroke="#ddd" strokeWidth="1.200" /></svg>
            </TaskButton>
            <Language>РУС</Language>
            <Clock>0:05<br />25.02.2023</Clock>
            <TaskButton $width={60} aria-label="Уведомления">
              <svg width="32" height="32" viewBox="0 0 32 32"><path d="M1 3h20v15h-9l-4 4v-4H1z" fill="#fff" /><path d="M4 7h14M4 10.500h14M4 14h9" stroke="#2a2a2a" strokeWidth="1.300" /><circle cx="21" cy="22" r="9.500" fill="#3a3a3a" stroke="#999" /><text x="21" y="27" textAnchor="middle" fontSize="14" fill="#fff">1</text></svg>
            </TaskButton>
          </Tray>
        </TaskBar>
      </Screen>
    </>
  );
}
